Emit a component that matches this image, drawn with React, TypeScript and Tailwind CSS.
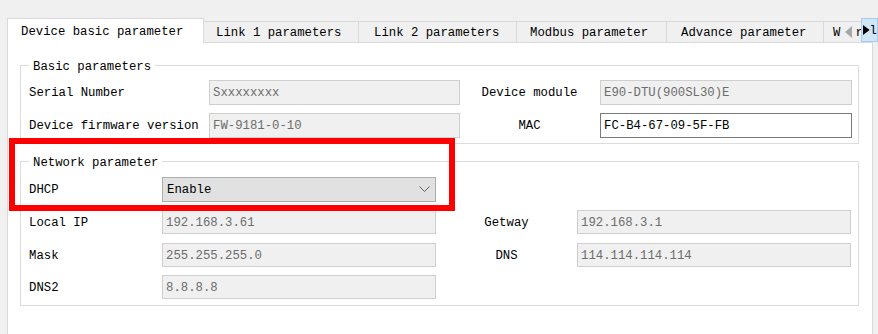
import React from 'react';

const font = { fontFamily: '"Liberation Mono", "Noto Sans CJK SC", monospace' };

type Tab = { label: string; width: string; pad: string; active?: boolean };

const tabs: Tab[] = [
  { label: 'Device basic parameter', width: 'w-[197px]', pad: 'pl-[13px]', active: true },
  { label: 'Link 1 parameters', width: 'w-[155px]', pad: 'pl-[12px]' },
  { label: 'Link 2 parameters', width: 'w-[158px]', pad: 'pl-[15px]' },
  { label: 'Modbus parameter', width: 'w-[150px]', pad: 'pl-[13px]' },
  { label: 'Advance parameter', width: 'w-[157px]', pad: 'pl-[14px]' },
];

function Field({ value, width, editable = false }: { value: string; width: string; editable?: boolean }) {
  // disabled text boxes are grey, the MAC one is editable
  return (
    <div
      className={`${width} h-full flex items-center pl-[3px] pt-[2px] border ${
        editable ? 'bg-white border-[#7a7a7a] text-black' : 'bg-[#f0f0f0] border-[#cfcfcf] text-[#6d6d6d]'
      }`}
    >
      {value}
    </div>
  );
}

function Label({ text, className = '' }: { text: string; className?: string }) {
  return <div className={`pt-[2px] text-black ${className}`}>{text}</div>;
}

function Group({ title, className = '', children }: { title: string; className?: string; children: React.ReactNode }) {
  return (
    <fieldset className={`border border-[#dcdcdc] pl-[8px] ${className}`}>
      <legend className="px-[4px] h-[14px] pt-[2px] leading-[14px] text-black">{title}</legend>
      {children}
    </fieldset>
  );
}

export default function App() {
  return (
    <div className="relative w-[878px] h-[334px] overflow-hidden bg-[#f0f0f0] text-[12.3px] leading-none" style={font}>
      {/* tab strip */}
      <div className="flex items-end h-[42px] pl-[7px]">
        {tabs.map((t) =>
          t.active ? (
            <div
              key={t.label}
              className={`${t.width} ${t.pad} relative z-10 h-[25px] -mb-px pt-[2px] flex items-center bg-white border border-b-0 border-[#d9d9d9] text-black`}
            >
              {t.label}
            </div>
          ) : (
            <div
              key={t.label}
              className={`${t.width} ${t.pad} h-[21px] pt-[3px] flex items-center bg-[#f0f0f0] border-t border-r border-[#d9d9d9] text-black`}
            >
              {t.label}
            </div>
          )
        )}
        <div className="w-[54px] h-[21px] pt-[3px] flex items-center pl-[9px] border-t border-[#d9d9d9] text-black">
          <span>W</span>
          <svg className="ml-[5px] -mt-[3px]" width="7" height="12" viewBox="0 0 7 12">
            <path d="M7 0 L0 6 L7 12 Z" fill="#a8a8a8" />
          </svg>
          <span className="ml-[3px]">r</span>
        </div>
      </div>

      {/* tab scroll button */}
      <div className="absolute left-[861px] top-[18px] w-[17px] h-[24px] flex items-center bg-[#cfe5f8] border border-[#a9cdee]">
        <svg className="ml-[1px]" width="8" height="12" viewBox="0 0 8 12">
          <path d="M0 0 L8 6 L0 12 Z" fill="#000" />
        </svg>
        <span className="pt-[2px] text-black">l</span>
      </div>

      {/* tab page */}
      <div className="ml-[7px] w-[866px] h-[300px] bg-white border border-[#d9d9d9]">
        <Group title="Basic parameters" className="ml-[12px] mt-[15px] w-[839px] pt-[8px] pb-[5px]">
          <div className="flex flex-col gap-[8px]">
            <div className="flex items-center h-[25px]">
              <Label text="Serial Number" className="w-[180px]" />
              <Field value="Sxxxxxxxx" width="w-[251px]" />
              <Label text="Device module" className="ml-[21px] w-[97px] text-center" />
              <div className="ml-[22px] h-full">
                <Field value="E90-DTU(900SL30)E" width="w-[252px]" />
              </div>
            </div>
            <div className="flex items-center h-[25px]">
              <Label text="Device firmware version" className="w-[180px]" />
              <Field value="FW-9181-0-10" width="w-[251px]" />
              <Label text="MAC" className="ml-[21px] w-[97px] text-center" />
              <div className="ml-[22px] h-full">
                <Field value="FC-B4-67-09-5F-FB" width="w-[252px]" editable />
              </div>
            </div>
          </div>
        </Group>

        <Group title="Network parameter" className="ml-[12px] mt-[10px] w-[839px] pt-[9px] pb-[6px]">
          <div className="flex items-center h-[25px]">
            <Label text="DHCP" className="w-[133px]" />
            <div className="w-[274px] h-full flex items-center justify-between pl-[4px] pr-[5px] bg-[#e1e1e1] border border-[#adadad] text-black">
              <span className="pt-[2px]">Enable</span>
              <svg width="11" height="7" viewBox="0 0 11 7">
                <path d="M0.5 0.5 L5.5 5.5 L10.5 0.5" fill="none" stroke="#606060" strokeWidth="1" />
              </svg>
            </div>
          </div>
          <div className="flex items-center h-[24px] mt-[8px]">
            <Label text="Local IP" className="w-[133px]" />
            <Field value="192.168.3.61" width="w-[274px]" />
            <Label text="Getway" className="w-[141px] text-center" />
            <Field value="192.168.3.1" width="w-[274px]" />
          </div>
          <div className="flex items-center h-[24px] mt-[9px]">
            <Label text="Mask" className="w-[133px]" />
            <Field value="255.255.255.0" width="w-[274px]" />
            <Label text="DNS" className="w-[141px] text-center" />
            <Field value="114.114.114.114" width="w-[274px]" />
          </div>
          <div className="flex items-center h-[24px] mt-[8px]">
            <Label text="DNS2" className="w-[133px]" />
            <Field value="8.8.8.8" width="w-[274px]" />
          </div>
        </Group>
      </div>

      {/* red highlight annotation */}
      <div className="absolute left-[9px] top-[138px] w-[446px] h-[73px] border-[6px] border-[#ff0000]" />
    </div>
  );
}
